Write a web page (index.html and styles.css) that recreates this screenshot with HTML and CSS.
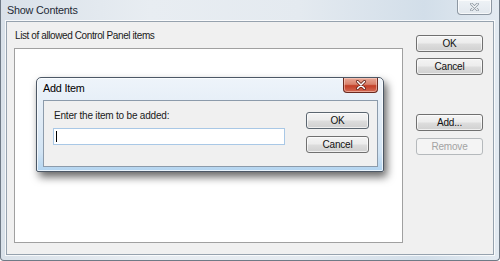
FILE: index.html
```html
<!DOCTYPE html>
<html>
<head>
<meta charset="utf-8">
<link rel="stylesheet" href="styles.css">
</head>
<body>
<div class="window">
  <div class="titlebar">
    <span class="title">Show Contents</span>
    <div class="close close-inactive">
      <svg width="9" height="8" viewBox="0 0 9 8"><path d="M1.5 1 L7.5 7 M7.5 1 L1.5 7" stroke="#8a949e" stroke-width="2.6" stroke-linecap="round"/><path d="M1.5 1 L7.5 7 M7.5 1 L1.5 7" stroke="#f4f6f8" stroke-width="1.1" stroke-linecap="round"/></svg>
    </div>
  </div>
  <div class="frame">
    <div class="client">
      <div class="main">
        <div class="label">List of allowed Control Panel items</div>
        <div class="listbox"></div>
      </div>
      <div class="side">
        <button class="btn">OK</button>
        <button class="btn btn-cancel">Cancel</button>
        <button class="btn btn-add">Add...</button>
        <button class="btn btn-remove" disabled>Remove</button>
      </div>
    </div>
  </div>

  <div class="dialog">
    <div class="dlg-titlebar">
      <span class="dlg-title">Add Item</span>
      <div class="close close-red">
        <svg width="12" height="10" viewBox="0 0 12 10"><path d="M2.5 1.5 L9.5 8.5 M9.5 1.5 L2.5 8.5" stroke="#5a1a10" stroke-width="3" stroke-linecap="round"/><path d="M2.5 1.5 L9.5 8.5 M9.5 1.5 L2.5 8.5" stroke="#ffffff" stroke-width="1.5" stroke-linecap="round"/></svg>
      </div>
    </div>
    <div class="dlg-client">
      <div class="dlg-main">
        <div class="dlg-label">Enter the item to be added:</div>
        <div class="textbox"><span class="caret"></span></div>
      </div>
      <div class="dlg-side">
        <button class="btn dbtn btn-default">OK</button>
        <button class="btn dbtn dbtn-cancel">Cancel</button>
      </div>
    </div>
  </div>
</div>
</body>
</html>
```

FILE: styles.css
```css
html, body {
  margin: 0;
  padding: 0;
  background: #ffffff;
}

body {
  font-family: "Liberation Sans", Arial, sans-serif;
  font-size: 10px;
  color: #1a1a1a;
}

.window {
  position: relative;
  box-sizing: border-box;
  width: 500px;
  height: 261px;
  display: flex;
  flex-direction: column;
  border: 1px solid #6f7a86;
  border-top: none;
  border-radius: 0 0 4px 4px;
  background: linear-gradient(90deg, #d9e1e9 0%, #e8edf2 30%, #e4eaf0 60%, #d2dee9 85%, #e3eaf1 100%);
}

.titlebar {
  height: 21px;
  display: flex;
  align-items: flex-start;
  flex: none;
}

.title {
  padding-left: 6px;
  padding-top: 4px;
  font-size: 10.8px;
  letter-spacing: -0.2px;
  color: #1e2a36;
}

.close {
  margin-left: auto;
  box-sizing: border-box;
  width: 35px;
  height: 15px;
  border-radius: 0 0 4px 4px;
  display: flex;
  align-items: center;
  justify-content: center;
}

.close-inactive {
  margin-right: 7px;
  border: 1px solid #8e98a3;
  border-top: none;
  background: linear-gradient(#eef2f6, #e2e8ee);
  box-shadow: inset 0 0 0 1px rgba(255, 255, 255, 0.7);
}

.frame {
  flex: 1;
  display: flex;
  padding: 0 5px 5px 5px;
}

.client {
  flex: 1;
  display: flex;
  border: 1px solid #96a2ae;
  background: #f0f0f0;
  box-shadow: 0 0 0 1px rgba(255, 255, 255, 0.75);
}

.main {
  flex: none;
  padding: 8px 0 0 7px;
}

.label {
  height: 12px;
  line-height: 12px;
  padding-left: 1px;
  letter-spacing: -0.4px;
  margin-bottom: 6px;
}

.listbox {
  box-sizing: border-box;
  width: 389px;
  height: 195px;
  background: #ffffff;
  border: 1px solid #a0a0a0;
}

.side {
  display: flex;
  flex-direction: column;
  margin-left: 13px;
  padding-top: 13px;
}

.btn {
  box-sizing: border-box;
  width: 67px;
  height: 17px;
  padding: 0;
  border: 1px solid #707070;
  border-radius: 3px;
  background: linear-gradient(#f4f4f4 0%, #ececec 48%, #dddddd 52%, #d0d0d0 100%);
  box-shadow: inset 0 0 0 1px rgba(255, 255, 255, 0.65);
  font-family: "Liberation Sans", Arial, sans-serif;
  font-size: 10px;
  letter-spacing: -0.2px;
  line-height: 15px;
  color: #111;
  text-align: center;
}

.btn-cancel {
  margin-top: 6px;
}

.btn-add {
  margin-top: 39px;
}

.btn-remove {
  margin-top: 7px;
  border-color: #b5b9bc;
  background: #f4f4f4;
  color: #a3a3a3;
  box-shadow: none;
}

/* Add Item dialog (overlays the main window) */
.dialog {
  position: absolute;
  left: 35px;
  top: 77px;
  box-sizing: border-box;
  width: 348px;
  height: 95px;
  display: flex;
  flex-direction: column;
  border: 1px solid #4c5866;
  border-radius: 5px 5px 2px 2px;
  background: linear-gradient(#eef4fa 0%, #e2ecf6 40%, #d2e4f4 80%, #b2d4f0 100%);
  box-shadow: 3px 5px 9px rgba(0, 0, 0, 0.6), inset 0 0 0 1px rgba(255, 255, 255, 0.7);
}

.dlg-titlebar {
  height: 22px;
  display: flex;
  align-items: flex-start;
  flex: none;
}

.dlg-title {
  padding-left: 6px;
  padding-top: 4px;
  font-size: 10.8px;
  letter-spacing: -0.2px;
  color: #000;
}

.close-red {
  margin-right: 5px;
  border: 1px solid #6a2a20;
  border-top: none;
  background: linear-gradient(#e8a896 0%, #d9826c 45%, #c33f27 55%, #d36b55 100%);
  box-shadow: inset 0 0 0 1px rgba(255, 220, 210, 0.5);
}

.dlg-client {
  flex: 1;
  display: flex;
  margin: 0 5px 4px 6px;
  border: 1px solid #8c9bab;
  background: #f0f0f0;
}

.dlg-main {
  padding: 9px 0 0 9px;
}

.dlg-label {
  height: 12px;
  line-height: 12px;
  padding-left: 1px;
  letter-spacing: -0.2px;
  margin-bottom: 6px;
}

.textbox {
  box-sizing: border-box;
  width: 232px;
  height: 17px;
  background: #ffffff;
  border: 1px solid #a9c8e6;
  padding: 2px 0 0 2px;
}

.caret {
  display: block;
  width: 1px;
  height: 11px;
  background: #000;
}

.dlg-side {
  display: flex;
  flex-direction: column;
  margin-left: 21px;
  padding-top: 11px;
}

.dbtn {
  width: 63px;
}

.dbtn-cancel {
  margin-top: 7px;
}

.btn-default {
  border-color: #5b6670;
}
```
